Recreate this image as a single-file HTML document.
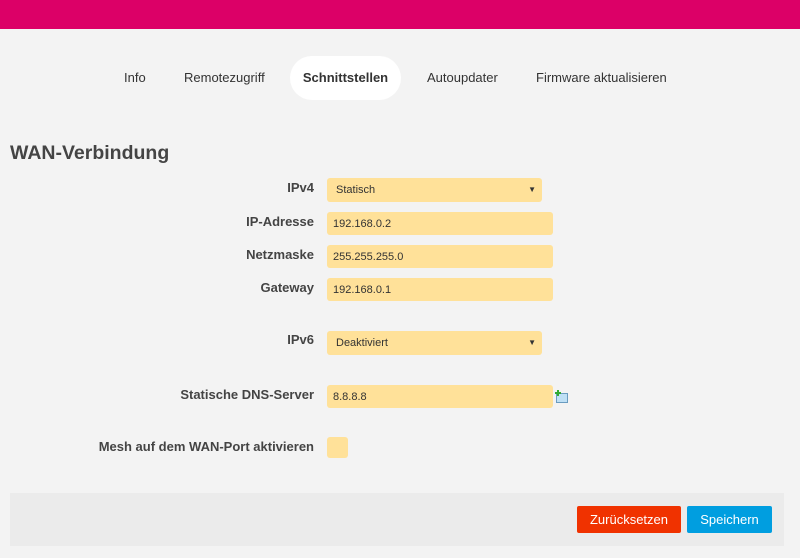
<!DOCTYPE html>
<html><head><meta charset="utf-8"><style>
*{margin:0;padding:0;box-sizing:border-box}
body{width:800px;height:558px;background:#f3f3f3;font-family:"Liberation Sans",sans-serif;color:#333;position:relative;overflow:hidden}
.top{position:absolute;left:0;top:0;width:800px;height:29px;background:#dc0067}
.nav{position:absolute;top:56px;height:44px;font-size:13px;line-height:44px;color:#333}
.pill{background:#fff;border-radius:22px;font-weight:bold;text-align:center}
h2{position:absolute;left:10px;top:142px;font-size:19.5px;color:#444;font-weight:bold}
.lbl{position:absolute;right:486px;font-size:13px;font-weight:bold;color:#444;white-space:nowrap}
.in{position:absolute;left:327px;background:#ffe199;border-radius:3px;font-size:11px;color:#333;padding-left:6px;line-height:24px}
.arr{position:absolute;right:6px;top:0;font-size:8px}
.foot{position:absolute;left:10px;top:493px;width:774px;height:53px;background:#ebebeb}
.btn{position:absolute;top:506px;height:27px;color:#fff;font-size:13px;line-height:27px;text-align:center;border-radius:2px}
</style></head><body>
<div class="top"></div>
<div class="nav" style="left:124px">Info</div>
<div class="nav" style="left:184px">Remotezugriff</div>
<div class="nav pill" style="left:290px;width:111px">Schnittstellen</div>
<div class="nav" style="left:427px">Autoupdater</div>
<div class="nav" style="left:536px">Firmware aktualisieren</div>
<h2>WAN-Verbindung</h2>
<div class="lbl" style="top:180px">IPv4</div>
<div class="in" style="top:178px;width:215px;height:24px;padding-left:9px">Statisch<span class="arr">▼</span></div>
<div class="lbl" style="top:214px">IP-Adresse</div>
<div class="in" style="top:212px;width:226px;height:23px">192.168.0.2</div>
<div class="lbl" style="top:247px">Netzmaske</div>
<div class="in" style="top:245px;width:226px;height:23px">255.255.255.0</div>
<div class="lbl" style="top:280px">Gateway</div>
<div class="in" style="top:278px;width:226px;height:23px">192.168.0.1</div>
<div class="lbl" style="top:332px">IPv6</div>
<div class="in" style="top:331px;width:215px;height:24px;padding-left:9px">Deaktiviert<span class="arr">▼</span></div>
<div class="lbl" style="top:387px">Statische DNS-Server</div>
<div class="in" style="top:385px;width:226px;height:23px">8.8.8.8</div>
<svg style="position:absolute;left:555px;top:390px" width="13" height="13" viewBox="0 0 13 13"><rect x="1.5" y="3.5" width="11" height="9" fill="#bfe0f5" stroke="#6a9cc0"/><path d="M3 0v6M0 3h6" stroke="#3a3" stroke-width="2"/></svg>
<div class="lbl" style="top:439px">Mesh auf dem WAN-Port aktivieren</div>
<div class="in" style="top:437px;width:21px;height:21px"></div>
<div class="foot"></div>
<div class="btn" style="left:577px;width:104px;background:#f03200">Zurücksetzen</div>
<div class="btn" style="left:687px;width:85px;background:#009ee0">Speichern</div>
</body></html>
